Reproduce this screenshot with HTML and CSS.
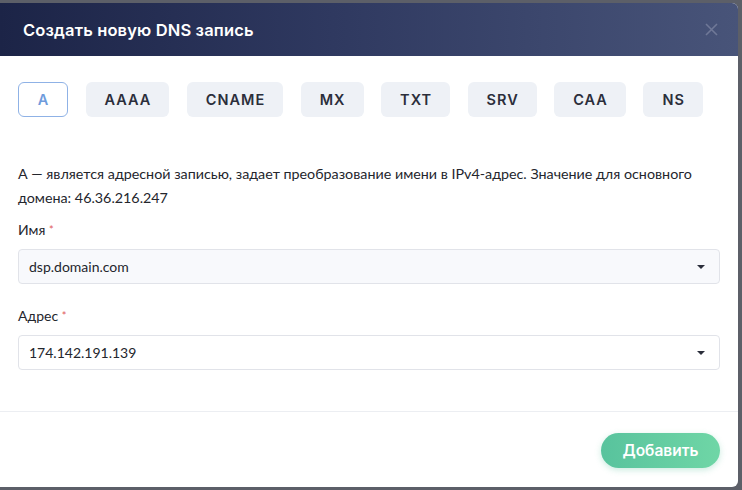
FILE: index.html
```html
<!DOCTYPE html>
<html lang="ru">
<head>
<meta charset="utf-8">
<link rel="stylesheet" href="styles.css">
</head>
<body>
<div class="overlay">
  <div class="modal">
    <div class="header">
      <h1 class="title">Создать новую DNS запись</h1>
      <span class="close">
        <svg width="13" height="13" viewBox="0 0 13 13"><path d="M1 1L12 12M12 1L1 12" stroke="#6f7897" stroke-width="1.6" fill="none"/></svg>
      </span>
    </div>
    <div class="body">
      <div class="tabs">
        <span class="tab active">A</span>
        <span class="tab">AAAA</span>
        <span class="tab">CNAME</span>
        <span class="tab">MX</span>
        <span class="tab">TXT</span>
        <span class="tab">SRV</span>
        <span class="tab">CAA</span>
        <span class="tab">NS</span>
      </div>
      <p class="desc">А — является адресной записью, задает преобразование имени в IPv4-адрес. Значение для основного домена: 46.36.216.247</p>
      <div class="field">
        <label class="label">Имя <span class="req">*</span></label>
        <div class="select filled"><span>dsp.domain.com</span><span class="caret"></span></div>
      </div>
      <div class="field">
        <label class="label">Адрес <span class="req">*</span></label>
        <div class="select"><span>174.142.191.139</span><span class="caret"></span></div>
      </div>
    </div>
    <div class="footer">
      <button class="btn">Добавить</button>
    </div>
  </div>
</div>
</body>
</html>
```

FILE: styles.css
```css
* { box-sizing: border-box; }
html, body { margin: 0; padding: 0; }
body {
  background: #5c5f68;
  font-family: Lato, "Open Sans", sans-serif;
  width: 742px;
  height: 490px;
  overflow: hidden;
}
.overlay {
  padding: 3px 4px 3px 0;
  height: 490px;
}
.modal {
  background: #fff;
  height: 484px;
  border-radius: 0 6px 6px 0;
  overflow: hidden;
  display: flex;
  flex-direction: column;
}
.header {
  height: 53px;
  flex: none;
  padding: 0 20px 0 23px;
  display: flex;
  align-items: center;
  justify-content: space-between;
  background: linear-gradient(90deg, #1c2447 0%, #2f3960 45%, #485479 100%);
}
.title {
  margin: 0;
  color: #fff;
  font-family: Inter, "Noto Sans", sans-serif;
  font-weight: 600;
  font-size: 16.5px;
  letter-spacing: 0.15px;
}
.close { display: flex; align-items: center; }
.body {
  padding: 26px 18px 41px 18px;
  flex: 1;
  border-bottom: 1px solid #eceef2;
}
.tabs {
  display: flex;
  gap: 17.5px;
}
.tab {
  height: 35px;
  display: flex;
  align-items: center;
  justify-content: center;
  padding: 0 18px 0 19px;
  background: #eef1f6;
  border-radius: 6px;
  font-family: Inter, "Noto Sans", sans-serif;
  font-weight: 600;
  font-size: 14.5px;
  letter-spacing: 1px;
  color: #2b2e3b;
}
.tab.active {
  width: 50px;
  padding: 0 0 0 1px;
  background: #fff;
  border: 1.5px solid #8fb2e6;
  color: #6f9bdc;
}
.desc {
  margin: 45px 0 8px;
  font-size: 14.3px;
  line-height: 24px;
  color: #24262d;
}
.field { margin-bottom: 20px; }
.field:last-child { margin-bottom: 0; }
.label {
  display: block;
  font-size: 14px;
  line-height: 24px;
  color: #24262d;
  margin-bottom: 7px;
}
.req { color: #e05a5a; font-size: 11px; vertical-align: top; }
.select {
  height: 35px;
  border: 1px solid #e1e3e9;
  border-radius: 4px;
  background: #fff;
  display: flex;
  align-items: center;
  justify-content: space-between;
  padding: 0 14px 0 10px;
  font-size: 14px;
  color: #24262d;
}
.select.filled { background: #f8f9fc; }
.caret {
  width: 0;
  height: 0;
  border-left: 4px solid transparent;
  border-right: 4px solid transparent;
  border-top: 4px solid #2b2e3b;
}
.footer {
  flex: none;
  height: 76px;
  display: flex;
  align-items: center;
  justify-content: flex-end;
  padding: 0 18px 0 0;
}
.btn {
  width: 119px;
  height: 35px;
  border: none;
  border-radius: 18px;
  background: linear-gradient(90deg, #58c39d 0%, #6fd6a6 100%);
  color: #fff;
  font-family: Inter, "Noto Sans", sans-serif;
  font-weight: 600;
  font-size: 15.5px;
  box-shadow: 0 2px 6px rgba(80, 190, 150, 0.3);
}
```
